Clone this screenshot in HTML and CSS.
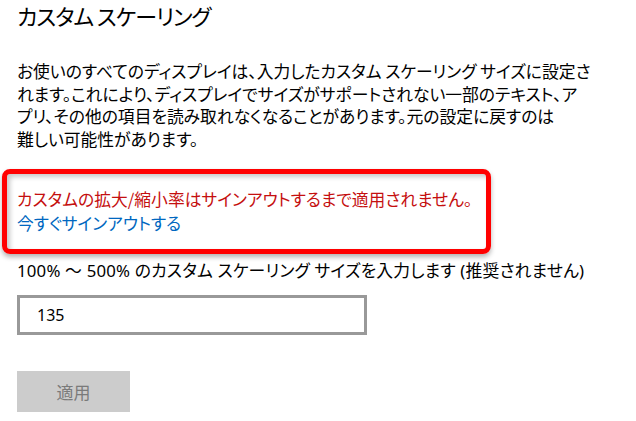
FILE: index.html
```html
<!DOCTYPE html>
<html lang="ja">
<head>
<meta charset="utf-8">
<link rel="stylesheet" href="styles.css">
</head>
<body>
<main class="page">
  <h1 class="title">カスタム スケーリング</h1>
  <p class="desc">お使いのすべてのディスプレイは、入力したカスタム スケーリング サイズに設定さ<br>れます。これにより、ディスプレイでサイズがサポートされない一部のテキスト、ア<br>プリ、その他の項目を読み取れなくなることがあります。元の設定に戻すのは<br>難しい可能性があります。</p>
  <div class="notice">
    <div class="warn">カスタムの拡大/縮小率はサインアウトするまで適用されません。</div>
    <a class="link" href="#">今すぐサインアウトする</a>
  </div>
  <label class="label" for="scale">100% ～ 500% のカスタム スケーリング サイズを入力します (推奨されません)</label>
  <input class="field" id="scale" type="text" value="135">
  <button class="apply" type="button" disabled>適用</button>
</main>
</body>
</html>
```

FILE: styles.css
```css
html, body {
  margin: 0;
  padding: 0;
  background: #ffffff;
}

body {
  font-family: "Noto Sans", "Noto Sans CJK JP", sans-serif;
  font-feature-settings: "palt";
  color: #000000;
}

.page {
  display: flex;
  flex-direction: column;
  align-items: flex-start;
  padding: 0 0 0 17px;
}

.title {
  margin: 0;
  font-family: "Noto Sans CJK JP", sans-serif;
  font-weight: 400;
  font-size: 22px;
  line-height: 30px;
  letter-spacing: -1px;
}

.desc {
  margin: 30px 0 0 0;
  white-space: nowrap;
  font-family: "Noto Sans CJK JP", sans-serif;
  font-size: 16.8px;
  line-height: 22.5px;
}

.notice {
  margin: 19px 0 0 -15px;
  width: 469px;
  border: 5px solid #ff0000;
  border-radius: 8px;
  padding: 13px 0 14px 10px;
  box-shadow: 0 3px 5px rgba(0, 0, 0, 0.3), inset 3px 3px 5px rgba(0, 0, 0, 0.22);
  display: flex;
  flex-direction: column;
  font-family: "Noto Sans CJK JP", sans-serif;
  font-size: 16.8px;
  line-height: 24px;
}

.warn {
  color: #c50f0f;
  white-space: nowrap;
}

.link {
  color: #0067c0;
  text-decoration: none;
}

.label {
  margin-top: 6px;
  font-size: 16.8px;
  line-height: 22px;
  letter-spacing: 0.2px;
}

.field {
  margin-top: 13px;
  box-sizing: border-box;
  width: 350px;
  height: 40px;
  border: 3px solid #999999;
  padding: 0 0 0 17px;
  font-family: "Noto Sans", sans-serif;
  font-size: 16px;
  color: #000000;
  outline: none;
  background: #ffffff;
}

.apply {
  margin-top: 36px;
  width: 113px;
  height: 41px;
  border: none;
  background: #cccccc;
  color: #7a7a7a;
  font-family: "Noto Sans CJK JP", sans-serif;
  font-size: 17px;
  padding: 0;
}
```
